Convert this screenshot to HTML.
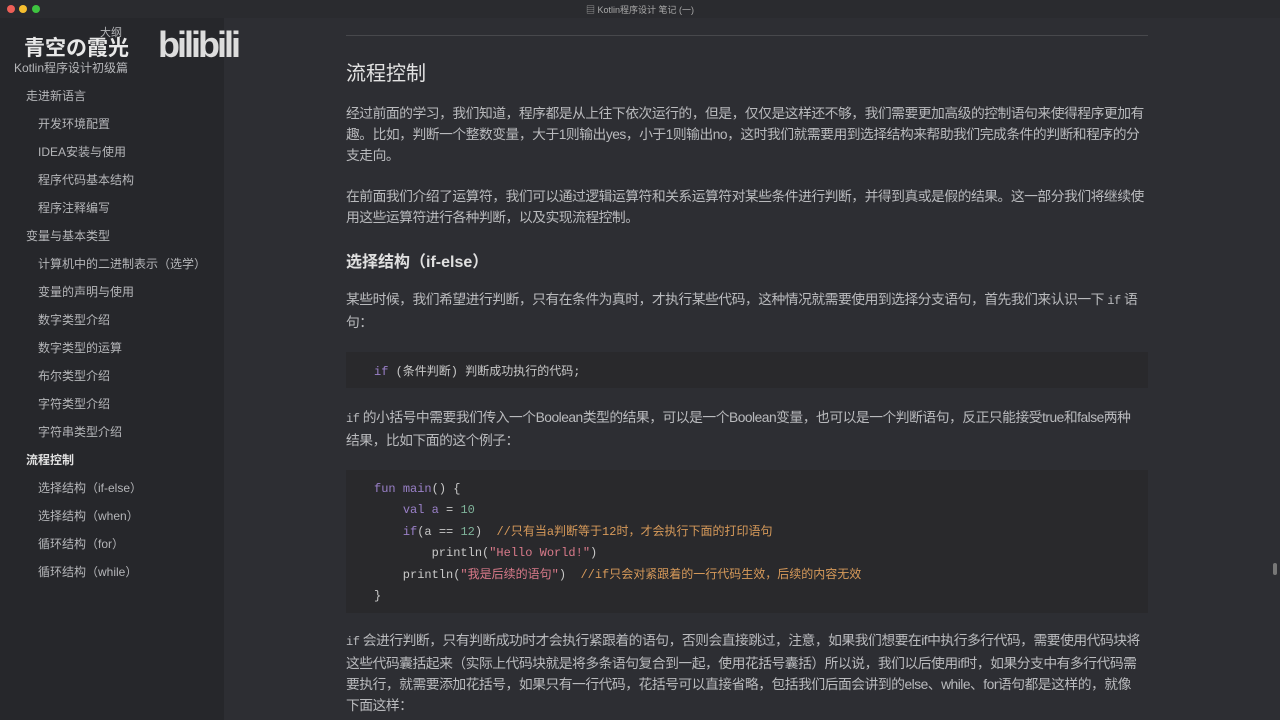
<!DOCTYPE html>
<html><head><meta charset="utf-8"><style>
*{margin:0;padding:0;box-sizing:border-box}
body{width:1280px;height:720px;overflow:hidden;background:#2d2e33;font-family:"Liberation Sans","Noto Sans CJK SC",sans-serif;color:#b9babd;position:relative}
.tb{position:absolute;left:0;top:0;width:1280px;height:18px;background:#2a2b2f}
.tb .t{position:absolute;left:0;right:0;top:3px;text-align:center;font-size:9px;color:#aaa}
.dot{position:absolute;top:5px;width:8px;height:8px;border-radius:50%}
.sb{position:absolute;left:0;top:18px;width:224px;height:702px;background:#26272b}
.sb div{position:absolute;font-size:12px;color:#b5b6b9;white-space:nowrap}
.main{position:absolute;left:346px;top:0;width:806px}
p{font-size:13.8px;line-height:21px;position:absolute;left:0;width:820px;letter-spacing:-0.5px;white-space:nowrap}
.code{position:absolute;left:0;width:802px;background:#29292c;font-family:"Liberation Mono","Noto Sans CJK SC",monospace;font-size:12px;color:#c8c8c8}
.k{color:#9a80c8}.n{color:#7fb39a}.s{color:#d97a8a}.c{color:#d79a5a}.ic{font-family:"Liberation Mono",monospace;font-size:12px}
</style></head><body>
<div class="tb"><span class="dot" style="left:7px;background:#ed5f57"></span><span class="dot" style="left:19px;background:#f5be2f"></span><span class="dot" style="left:32px;background:#3ec440"></span><div class="t">▤ Kotlin程序设计 笔记 (一)</div></div>
<div class="sb">
<div style="left:24px;top:14px;font-size:21px;color:#e8e8e8;font-weight:bold">青空の霞光</div>
<div style="left:100px;top:6px;font-size:11px">大纲</div>
<div style="left:158px;top:6px;font-size:36px;color:#ddd;font-weight:bold;letter-spacing:-3px">bilibili</div>
<div style="left:14px;top:41px">Kotlin程序设计初级篇</div>
<div style="left:26px;top:69px">走进新语言</div>
<div style="left:38px;top:97px">开发环境配置</div>
<div style="left:38px;top:125px">IDEA安装与使用</div>
<div style="left:38px;top:153px">程序代码基本结构</div>
<div style="left:38px;top:181px">程序注释编写</div>
<div style="left:26px;top:209px">变量与基本类型</div>
<div style="left:38px;top:237px">计算机中的二进制表示（选学）</div>
<div style="left:38px;top:265px">变量的声明与使用</div>
<div style="left:38px;top:293px">数字类型介绍</div>
<div style="left:38px;top:321px">数字类型的运算</div>
<div style="left:38px;top:349px">布尔类型介绍</div>
<div style="left:38px;top:377px">字符类型介绍</div>
<div style="left:38px;top:405px">字符串类型介绍</div>
<div style="left:26px;top:433px;color:#e0e0e0;font-weight:bold">流程控制</div>
<div style="left:38px;top:461px">选择结构（if-else）</div>
<div style="left:38px;top:489px">选择结构（when）</div>
<div style="left:38px;top:517px">循环结构（for）</div>
<div style="left:38px;top:545px">循环结构（while）</div>
</div>
<div style="position:absolute;left:1273px;top:563px;width:4px;height:12px;background:#777;border-radius:2px"></div>
<div class="main">
<div style="position:absolute;top:35px;left:0;width:802px;height:1px;background:#47484c"></div>
<div style="position:absolute;top:57px;font-size:20px;color:#e2e2e2">流程控制</div>
<p style="top:103px">经过前面的学习，我们知道，程序都是从上往下依次运行的，但是，仅仅是这样还不够，我们需要更加高级的控制语句来使得程序更加有<br>趣。比如，判断一个整数变量，大于1则输出yes，小于1则输出no，这时我们就需要用到选择结构来帮助我们完成条件的判断和程序的分<br>支走向。</p>
<p style="top:186px">在前面我们介绍了运算符，我们可以通过逻辑运算符和关系运算符对某些条件进行判断，并得到真或是假的结果。这一部分我们将继续使<br>用这些运算符进行各种判断，以及实现流程控制。</p>
<div style="position:absolute;top:248px;font-size:16px;font-weight:bold;color:#e0e0e0">选择结构（if-else）</div>
<p style="top:289px">某些时候，我们希望进行判断，只有在条件为真时，才执行某些代码，这种情况就需要使用到选择分支语句，首先我们来认识一下 <span class="ic">if</span> 语<br>句：</p>
<div class="code" style="top:352px;height:36px;padding:10px 28px"><span class="k">if</span> (条件判断) 判断成功执行的代码;</div>
<p style="top:407px"> <span class="ic">if</span> 的小括号中需要我们传入一个Boolean类型的结果，可以是一个Boolean变量，也可以是一个判断语句，反正只能接受true和false两种<br>结果，比如下面的这个例子：</p>
<div class="code" style="top:470px;height:143px;padding:9px 28px;line-height:21.4px;white-space:pre"><span class="k">fun</span> <span class="k">main</span>() {
    <span class="k">val</span> <span class="k">a</span> = <span class="n">10</span>
    <span class="k">if</span>(a == <span class="n">12</span>)  <span class="c">//只有当a判断等于12时，才会执行下面的打印语句</span>
        println(<span class="s">"Hello World!"</span>)
    println(<span class="s">"我是后续的语句"</span>)  <span class="c">//if只会对紧跟着的一行代码生效，后续的内容无效</span>
}</div>
<p style="top:630px"> <span class="ic">if</span> 会进行判断，只有判断成功时才会执行紧跟着的语句，否则会直接跳过，注意，如果我们想要在if中执行多行代码，需要使用代码块将<br>这些代码囊括起来（实际上代码块就是将多条语句复合到一起，使用花括号囊括）所以说，我们以后使用if时，如果分支中有多行代码需<br>要执行，就需要添加花括号，如果只有一行代码，花括号可以直接省略，包括我们后面会讲到的else、while、for语句都是这样的，就像<br>下面这样：</p>
</div>
</body></html>
